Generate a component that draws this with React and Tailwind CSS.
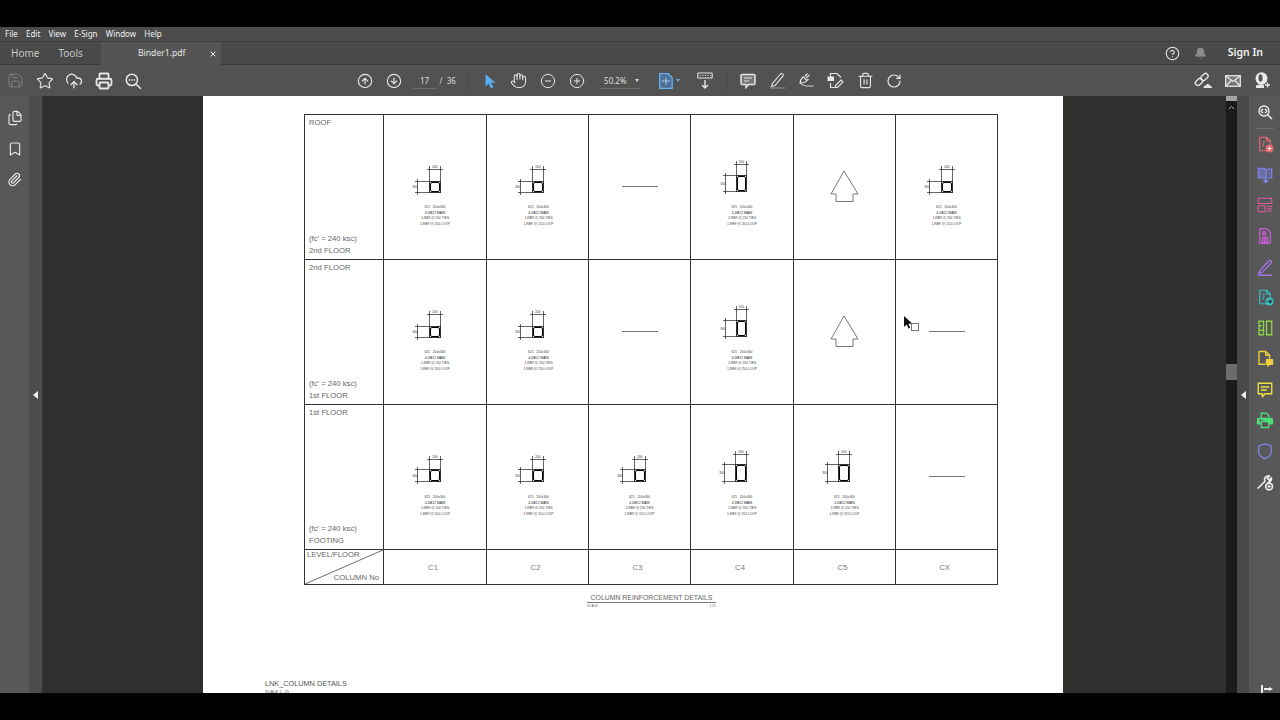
import React from "react";
import {
  Star, CloudUpload, Printer, CircleArrowUp, CircleArrowDown, Hand, CircleMinus, CirclePlus,
  Trash2, RotateCw, CircleHelp, Bell, ChevronUp, X, Paperclip, Bookmark, Files, Save,
} from "lucide-react";

const ui = "font-['Noto_Sans',sans-serif]";
const doc = "font-['Liberation_Sans',sans-serif]";

function Slot({ children, className = "" }) {
  return <div className={"w-[29.3px] h-[24px] flex items-center justify-center shrink-0 " + className}>{children}</div>;
}

function Svg({ children, size = 18, stroke = "currentColor", w = 1.5 }) {
  return (
    <svg width={size} height={size} viewBox="0 0 24 24" fill="none" stroke={stroke} strokeWidth={w} strokeLinecap="round" strokeLinejoin="round">
      {children}
    </svg>
  );
}

function SearchDots({ size = 18, arrows }) {
  return (
    <Svg size={size} w={2}>
      <circle cx="10.5" cy="10.5" r="7.5" />
      <path d="M16 16l6 6" />
      {arrows ? <path d="M8.5 8l-2.5 2.5 2.5 2.5M12.5 8l2.5 2.5-2.5 2.5" /> : <path d="M7 10.5h.5M10.3 10.5h.5M13.5 10.5h.5" />}
    </Svg>
  );
}

function Toolbar() {
  const c = "text-[#e6e6e6]";
  return (
    <div className={"h-[31px] bg-[#525252] flex items-center text-[#e8e8e8] " + ui}>
      <div className="flex ml-[1px]">
        <Slot><Save size={17} strokeWidth={1.4} className="text-[#858585]" /></Slot>
        <Slot><Star size={18} strokeWidth={1.5} className={c} /></Slot>
        <Slot><CloudUpload size={18} strokeWidth={1.7} className={c} /></Slot>
        <Slot><Printer size={18} strokeWidth={2.4} className={c} /></Slot>
        <Slot><SearchDots /></Slot>
      </div>
      <div className="flex ml-[203px]">
        <Slot><CircleArrowUp size={16} strokeWidth={1.7} className={c} /></Slot>
        <Slot><CircleArrowDown size={16} strokeWidth={1.7} className={c} /></Slot>
      </div>
      <div className="ml-[3.5px] w-[24px] border-b border-[#6c6c6c] text-[8px] leading-[15px] text-center text-[#dcdcdc]">17</div>
      <div className="ml-[3px] text-[8px] text-[#dcdcdc]">/&nbsp;&nbsp;36</div>
      <div className="ml-[11px] w-px h-[18px] bg-[#474747]" />
      <div className="flex ml-[7px]">
        <Slot>
          <svg width="14" height="16" viewBox="0 0 14 16"><path d="M2.5 1v12.5l3.2-3 2.4 5 2.2-1-2.2-4.7h4.4z" fill="#5aaef0" /></svg>
        </Slot>
        <Slot><Hand size={17} strokeWidth={1.5} className={c} /></Slot>
        <Slot><CircleMinus size={16} strokeWidth={1.5} className={c} /></Slot>
        <Slot><CirclePlus size={16} strokeWidth={1.5} className={c} /></Slot>
      </div>
      <div className="ml-[7px] w-[41px] border-b border-[#6c6c6c] flex items-center justify-between pl-[5px] pr-[1px] text-[8px] leading-[15px] text-[#dcdcdc]">
        <span>50.2%</span>
        <span className="w-0 h-0 border-x-[2.5px] border-x-transparent border-t-[3px] border-t-[#d8d8d8]" />
      </div>
      <div className="ml-[19px] flex items-center">
        <svg width="14" height="16" viewBox="0 0 14 16" fill="none">
          <path d="M.7.7h8.5l4 4v10.6H.7z" fill="#4f6f96" stroke="#62b4f4" strokeWidth="1.3" />
          <path d="M7 4.5v2M7 9.5v2M3 8h2M9 8h2M7 6.7l-1.2 1.3L7 9.3l1.2-1.3z" stroke="#bfe0ff" strokeWidth=".9" />
        </svg>
        <span className="ml-[3px] w-0 h-0 border-x-[2.5px] border-x-transparent border-t-[3px] border-t-[#62b4f4]" />
      </div>
      <div className="flex ml-[10px]">
        <Slot>
          <svg width="16" height="17" viewBox="0 0 16 17" fill="none" stroke="#e6e6e6">
            <rect x=".8" y="1" width="14.4" height="5" rx=".8" strokeWidth="1.1" />
            <path d="M3 3.5h1M5.5 3.5h1M8 3.5h1M10.5 3.5h1M13 3.5h.5" strokeWidth="1.1" />
            <path d="M8 8v8M5 13l3 3 3-3" strokeWidth="1.4" />
          </svg>
        </Slot>
      </div>
      <div className="ml-[7px] w-px h-[18px] bg-[#474747]" />
      <div className="flex ml-[6px]">
        <Slot>
          <svg width="16" height="16" viewBox="0 0 16 16" fill="none" stroke="#e6e6e6" strokeWidth="1.5">
            <path d="M2 1.5h12a1 1 0 0 1 1 1v8a1 1 0 0 1-1 1H8.5L6 14.5v-3H2a1 1 0 0 1-1-1v-8a1 1 0 0 1 1-1z" fill="#777" />
            <path d="M4 5h8M4 8h5" strokeWidth="1" />
          </svg>
        </Slot>
        <Slot>
          <svg width="17" height="17" viewBox="0 0 17 17" fill="none" stroke="#e6e6e6" strokeWidth="1.1">
            <path d="M3 12.2L11.5 2a1.6 1.6 0 0 1 2.4 2.1L6 13.5l-3.6 1z" />
            <path d="M1 16h15" stroke="#8a8a8a" strokeWidth="1.2" />
          </svg>
        </Slot>
        <Slot>
          <svg width="17" height="17" viewBox="0 0 17 17" fill="none" stroke="#e6e6e6" strokeWidth="1.1">
            <path d="M2 11c.2-3 1.5-4.5 3-6l4 3.5c-1.5 1.7-4 2.5-7 2.5zM6.5 4.5L9.5 1.5M8 6L11.5 3M9 8.5l1.5-1.5" />
            <path d="M2 11c3 3 5 2 6 3s2.5-1 3.5 0 2.5-.5 4 0" strokeWidth="1" />
          </svg>
        </Slot>
        <Slot>
          <svg width="17" height="17" viewBox="0 0 17 17" fill="none" stroke="#e6e6e6" strokeWidth="1.1">
            <path d="M3.5 5V1.5h6.5L14 5.5" />
            <path d="M1 5h5.5v3.500H1z" fill="#e6e6e6" />
            <path d="M3.5 11v4.500h4.500M14 8l2 2-5.500 5.500H8.500v-2z" />
          </svg>
        </Slot>
        <Slot><Trash2 size={17} strokeWidth={1.6} className={c} /></Slot>
        <Slot><RotateCw size={16} strokeWidth={1.8} className={c} /></Slot>
      </div>
      <div className="flex ml-auto mr-[3px]">
        <Slot>
          <svg width="19" height="18" viewBox="0 0 19 18" fill="none" stroke="#e6e6e6" strokeWidth="1.4">
            <rect x="1" y="7.5" width="8" height="5" rx="2.5" transform="rotate(-45 5 10)" />
            <rect x="6.5" y="2.5" width="8" height="5" rx="2.5" transform="rotate(-45 10.5 5)" />
            <path d="M9.5 16c0-2.200 1.500-3 2.700-2.800.5-1.500 3-1.500 3.500.3 1.500 0 2.300 1.300 2.300 2.500z" fill="#e6e6e6" stroke="none" />
          </svg>
        </Slot>
        <Slot>
          <svg width="16" height="12" viewBox="0 0 16 12" fill="#777" stroke="#e6e6e6" strokeWidth="1.3">
            <rect x=".7" y=".7" width="14.6" height="10.6" />
            <path d="M1 1l7 5.500L15 1M1 11l5-5.500M15 11l-5-5.500" fill="none" />
          </svg>
        </Slot>
        <Slot>
          <svg width="17" height="17" viewBox="0 0 17 17" fill="#e8e8e8">
            <ellipse cx="7.5" cy="6.5" rx="6" ry="6.3" />
            <path d="M2 13.5c3-1.500 7-1.500 8 0v2.500H2z" />
            <path d="M13.5 10.5v5M11 13h5" stroke="#e8e8e8" strokeWidth="1.3" />
            <ellipse cx="6.5" cy="6" rx="2" ry="3.8" fill="#525252" />
          </svg>
        </Slot>
      </div>
    </div>
  );
}

const shapes = {
  square: { x: 45, y: 66, w: 12, h: 12, top: 54, left: 31 },
  small: { x: 45, y: 64, w: 12, h: 13, top: 54, left: 31 },
  tall: { x: 45, y: 60, w: 11, h: 17, top: 49, left: 32 },
  wide: { x: 44, y: 59, w: 12, h: 18, top: 49, left: 31 },
};

function Section({ kind = "square", shift = 0 }) {
  const s = shapes[kind];
  const b = s.y + s.h;
  const r = s.x + s.w;
  return (
    <div className="w-full h-full flex flex-col items-center">
      <svg width="102" height="90" viewBox="0 0 102 90" fill="none" stroke="#222" strokeWidth=".7" className="shrink-0">
        <path d={`M${s.x - 2} ${s.top + 0.5}H${r + 2}M${s.x + 0.5} ${s.top - 3}V${s.y}M${r - 0.5} ${s.top - 3}V${s.y}`} />
        <path d={`M${s.left} ${s.y + 0.5}H${s.x}M${s.left} ${b - 0.5}H${s.x}M${s.left + 2.5} ${s.y - 2}V${b + 2}`} />
        <rect x={s.x + 0.5} y={s.y + 0.5} width={s.w - 1} height={s.h - 1} stroke="#333" strokeWidth="1" />
        <rect x={s.x + 1.5} y={s.y + 1.5} width={s.w - 3} height={s.h - 3} rx="1.5" stroke="#000" strokeWidth="1" />
        <text x={(s.x + r) / 2} y={s.top - 1} fontSize="3.2" fill="#333" stroke="none" textAnchor="middle" fontFamily="Liberation Sans">200</text>
        <text x={s.left} y={(s.y + b) / 2 + 1} fontSize="3.2" fill="#333" stroke="none" textAnchor="middle" fontFamily="Liberation Sans">300</text>
      </svg>
      <div className={"text-[3.3px] leading-[5.7px] text-[#444] text-center whitespace-nowrap " + doc} style={{ marginLeft: shift }}>
        <div>625&nbsp;&nbsp;&nbsp;200x300</div>
        <div className="text-[#222]">4-DB12 MAIN</div>
        <div>1-RB9 @ 250 TIES</div>
        <div>1-RB9 @ 250 LOOP</div>
      </div>
    </div>
  );
}

function Dash() {
  return (
    <div className="w-full h-full flex justify-center pt-[71px]">
      <div className="w-[36px] h-px bg-[#777]" />
    </div>
  );
}

function Arrow() {
  return (
    <div className="w-full h-full flex justify-center pt-[55px]">
      <svg width="30" height="32" viewBox="0 0 30 32" fill="none" stroke="#555" strokeWidth=".8">
        <path d="M14 1L1 24H6V31.500H23V24H28Z" />
      </svg>
    </div>
  );
}

function LevelCell({ top, sub }) {
  return (
    <div className={"border-r border-b border-[#333] pl-[4px] pb-[3px] pt-[2px] flex flex-col justify-between text-[7.7px] leading-[11.5px] text-[#666] " + doc}>
      <div>{top}</div>
      <div>
        <div>(fc' = 240 ksc)</div>
        <div>{sub}</div>
      </div>
    </div>
  );
}

const cell = "border-r border-b border-[#333] overflow-hidden";

function Page() {
  const rows = [
    { top: "ROOF", sub: "2nd FLOOR", cells: [<Section />, <Section shift={2} />, <Dash />, <Section kind="tall" />, <Arrow />, <Section />] },
    { top: "2nd FLOOR", sub: "1st FLOOR", cells: [<Section />, <Section shift={2} />, <Dash />, <Section kind="tall" />, <Arrow />, <Dash />] },
    { top: "1st FLOOR", sub: "FOOTING", cells: [<Section kind="small" />, <Section kind="small" shift={2} />, <Section kind="small" />, <Section kind="wide" />, <Section kind="wide" />, <Dash />] },
  ];
  return (
    <div className="relative w-[860px] h-full bg-white overflow-hidden pt-[18px] pl-[101px]">
      <div className="grid grid-cols-[79px_103px_102px_102px_103px_102px_102px] grid-rows-[145px_145px_145px_35px] w-[694px] border-t border-l border-[#333]">
        {rows.map((r, i) => (
          <React.Fragment key={i}>
            <LevelCell top={r.top} sub={r.sub} />
            {r.cells.map((c, j) => (
              <div key={j} className={cell}>{c}</div>
            ))}
          </React.Fragment>
        ))}
        <div className={"relative " + cell + " " + doc}>
          <svg width="78" height="34" className="absolute inset-0" fill="none" stroke="#444" strokeWidth=".8">
            <path d="M0 34L78 0" />
          </svg>
          <div className="flex flex-col justify-between h-full text-[7.7px] leading-[10px] text-[#666] pl-[2px] pr-[4px] pb-[1px]">
            <div>LEVEL/FLOOR</div>
            <div className="text-right">COLUMN No</div>
          </div>
        </div>
        {["C1", "C2", "C3", "C4", "C5", "CX"].map((t) => (
          <div key={t} className={cell + " flex items-center justify-center pr-[4px] pt-[1px] text-[7.7px] text-[#777] " + doc}>{t}</div>
        ))}
      </div>
      <div className={"ml-[283px] mt-[8px] w-[129px] " + doc}>
        <div className="text-[6.9px] leading-[9px] text-[#666] text-center whitespace-nowrap">COLUMN REINFORCEMENT DETAILS</div>
        <div className="h-px bg-[#777]" />
        <div className="flex justify-between text-[3.3px] leading-[5px] text-[#666] mt-[1px]">
          <span>SCALE</span>
          <span>1:25</span>
        </div>
      </div>
      <div className={"-ml-[39px] mt-[70px] text-[7.3px] leading-[9px] text-[#555] whitespace-nowrap " + doc}>
        LNK_COLUMN DETAILS
        <div className="text-[4px] leading-[5px] mt-[1px]">SCALE 1 : 25</div>
      </div>
      <svg width="18" height="18" viewBox="0 0 18 18" className="absolute left-[700px] top-[219px]" fill="none">
        <path d="M1 1v11l2.6-2.500 2 4 1.700-.8-1.900-3.900H9.500z" fill="#111" />
        <rect x="8.5" y="8.5" width="7" height="7" stroke="#777" />
      </svg>
    </div>
  );
}

function Tool({ children }) {
  return <div className="h-[30.7px] w-full flex items-center justify-center shrink-0">{children}</div>;
}

function RightRail() {
  return (
    <div className="w-[31px] bg-[#585858] shrink-0 flex flex-col items-center pt-[1px] relative">
      <Tool><span className="text-[#eee]"><SearchDots size={16} arrows /></span></Tool>
      <div className="w-[18px] h-px bg-[#6d6d6d]" />
      <Tool>
        <Svg stroke="#e86a72"><path d="M13 21H5V3h9l5 5v5" /><path d="M14 3v5h5M9 15c2-3 2-5 1.500-7" /><circle cx="18" cy="18" r="4.500" fill="#e86a72" /><path d="M18 16v4M16 18h4" stroke="#eee" /></Svg>
      </Tool>
      <Tool>
        <Svg stroke="#7f87ee"><path d="M3 3h8l3 3v10H3z" fill="#7f87ee" fillOpacity=".55" /><path d="M15 4h6v12h-5" fill="#7f87ee" fillOpacity=".35" /><path d="M13 17v5M10.500 19.500L13 22l2.500-2.500" strokeWidth="2" /></Svg>
      </Tool>
      <Tool>
        <Svg stroke="#dc5c96"><rect x="3" y="3" width="18" height="7" /><rect x="3" y="13" width="9" height="8" /><path d="M15 14h6M15 17h6M15 20h6" /></Svg>
      </Tool>
      <Tool>
        <Svg stroke="#c95fd6" w={1.7}><path d="M5 2.500h10l4 4v15H5z" /><path d="M9 6.500h4v4H9zM8.500 14h7v7.500h-7zM12 14v7.500" fill="#c95fd6" fillOpacity=".4" /></Svg>
      </Tool>
      <Tool>
        <Svg stroke="#a474e6" w={1.7}><path d="M5 17L17 4a2 2 0 0 1 3 3L8 19.500l-4.500 1z" /><path d="M3 23h18" strokeWidth="2" /></Svg>
      </Tool>
      <Tool>
        <Svg stroke="#34bfc4"><path d="M13 21H5V3h9l5 5v4" /><path d="M14 3v5h5M9 15c2-3 2-5 1.500-7" /><circle cx="18" cy="18" r="4.500" fill="#34bfc4" /><path d="M15.500 18h5M18.500 16l2 2-2 2" stroke="#333" /></Svg>
      </Tool>
      <Tool>
        <Svg stroke="#8fd84c" w={1.8}><rect x="14" y="3" width="7" height="18" /><path d="M4 3h6v18H4zM4 9h3M4 15h6" strokeDasharray="3 1.500" /></Svg>
      </Tool>
      <Tool>
        <Svg stroke="#efcf3d" w={1.8}><path d="M12 19H4V2h9l5 5v4" /><path d="M13 2v5h5" /><path d="M14 13h8v6h-4l-2 2.500V19h-2z" fill="#efcf3d" /></Svg>
      </Tool>
      <Tool>
        <Svg stroke="#f0e340" w={1.8}><path d="M3 3h18v14h-9l-3.500 4v-4H3z" /><path d="M7 8h10M7 12h7" /></Svg>
      </Tool>
      <Tool>
        <Svg stroke="#4fdc78" w={1.8}><path d="M7 10V3h7l3 3v4" /><path d="M4 10h16a2 2 0 0 1 2 2v5h-4M6 17H2v-5a2 2 0 0 1 2-2" fill="#4fdc78" /><path d="M7 14h10v8H7z" strokeDasharray="2 1.500" /></Svg>
      </Tool>
      <Tool>
        <Svg stroke="#8282e6" w={1.8}><path d="M12 2.500l8.500 3v7c0 4.500-3.500 7.500-8.500 9.500-5-2-8.500-5-8.500-9.500v-7z" /></Svg>
      </Tool>
      <Tool>
        <Svg stroke="#eee" w={2.2}><path d="M3 20L12 11a5 5 0 0 1 6-7l-3 3 2.500 2.500 3-3a5 5 0 0 1-4 6" /><circle cx="17.5" cy="18" r="4.5" /><path d="M17.5 16v4M15.500 18h4" strokeWidth="1.5" /></Svg>
      </Tool>
      <div className="absolute left-[12px] bottom-0 h-[8px] w-[14px] flex items-start">
        <div className="w-[2px] h-[8px] bg-[#eee]" />
        <div className="mt-[3px] ml-[1px] w-[5px] h-[2px] bg-[#eee]" />
        <div className="mt-[1.5px] w-0 h-0 border-y-[2.5px] border-y-transparent border-l-[4px] border-l-[#eee]" />
      </div>
    </div>
  );
}

export default function App() {
  return (
    <div className="w-[1280px] h-[720px] bg-black flex flex-col pt-[27px] pb-[27px] overflow-hidden">
      <div className={"h-[14px] bg-[#4c4c4c] flex items-center pl-[5px] gap-[8.2px] text-[8px] text-[#f0f0f0] shrink-0 " + ui}>
        {["File", "Edit", "View", "E-Sign", "Window", "Help"].map((t) => <span key={t}>{t}</span>)}
      </div>
      <div className={"h-[24px] bg-[#494949] border-t border-[#3e3e3e] flex items-stretch shrink-0 " + ui}>
        <div className="flex items-center pl-[11px] gap-[19px] w-[101px] text-[10px] text-[#c8c8c8] border-b border-[#3a3a3a]">
          <span>Home</span>
          <span>Tools</span>
        </div>
        <div className="w-[120px] bg-[#545454] flex items-center pl-[37px] text-[8.6px] text-[#e4e4e4]">
          <span>Binder1.pdf</span>
          <X size={8} strokeWidth={3} className="ml-[23px] text-[#eee]" />
        </div>
        <div className="flex-1 flex items-center border-b border-[#3a3a3a] pr-[17px]">
          <div className="ml-auto flex items-center">
            <CircleHelp size={15} strokeWidth={1.7} className="text-[#e8e8e8]" />
            <Bell size={13} fill="#8a8a8a" strokeWidth={1.5} className="ml-[14px] text-[#8a8a8a]" />
            <span className="ml-[21px] text-[10.5px] font-semibold text-[#f0f0f0]">Sign In</span>
          </div>
        </div>
      </div>
      <Toolbar />
      <div className="flex-1 min-h-0 flex">
        <div className="w-[29px] bg-[#585858] shrink-0 flex flex-col items-center pt-[14px] gap-[15px] text-[#e8e8e8]">
          <Files size={16} strokeWidth={1.7} />
          <Bookmark size={16} strokeWidth={1.7} />
          <Paperclip size={15} strokeWidth={1.8} />
        </div>
        <div className="w-[13px] bg-[#4c4c4c] shrink-0 flex items-center justify-center">
          <div className="w-0 h-0 border-y-[4px] border-y-transparent border-r-[5px] border-r-[#eee]" />
        </div>
        <div className="flex-1 min-w-0 bg-[#2f2f2d] pl-[161px]">
          <Page />
        </div>
        <div className="w-[11px] bg-[#1b1b1b] shrink-0 flex flex-col items-center">
          <div className="w-full h-[5px] bg-[#a4a4a4]" />
          <ChevronUp size={9} strokeWidth={2.5} className="mt-[2px] text-[#bbb]" />
          <div className="w-full h-[16px] bg-[#6b6b6b] mt-[252px]" />
        </div>
        <div className="w-[12px] bg-[#494949] shrink-0 flex items-center justify-center">
          <div className="w-0 h-0 border-y-[4px] border-y-transparent border-r-[5px] border-r-[#eee]" />
        </div>
        <RightRail />
      </div>
    </div>
  );
}
